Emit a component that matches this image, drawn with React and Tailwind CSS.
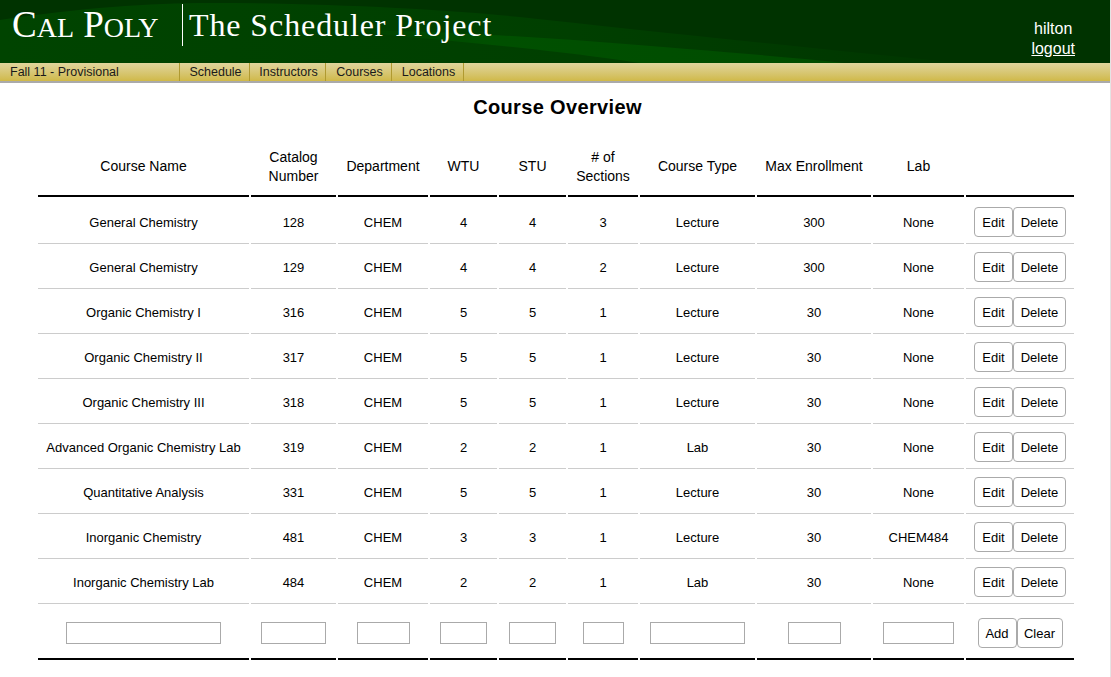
const courses = [
  { name: 'General Chemistry', num: 128, wtu: 4, stu: 4, sec: 3, type: 'Lecture', max: 300, lab: 'None' },
  { name: 'General Chemistry', num: 129, wtu: 4, stu: 4, sec: 2, type: 'Lecture', max: 300, lab: 'None' },
  { name: 'Organic Chemistry I', num: 316, wtu: 5, stu: 5, sec: 1, type: 'Lecture', max: 30, lab: 'None' },
  { name: 'Organic Chemistry II', num: 317, wtu: 5, stu: 5, sec: 1, type: 'Lecture', max: 30, lab: 'None' },
  { name: 'Organic Chemistry III', num: 318, wtu: 5, stu: 5, sec: 1, type: 'Lecture', max: 30, lab: 'None' },
  { name: 'Advanced Organic Chemistry Lab', num: 319, wtu: 2, stu: 2, sec: 1, type: 'Lab', max: 30, lab: 'None' },
  { name: 'Quantitative Analysis', num: 331, wtu: 5, stu: 5, sec: 1, type: 'Lecture', max: 30, lab: 'None' },
  { name: 'Inorganic Chemistry', num: 481, wtu: 3, stu: 3, sec: 1, type: 'Lecture', max: 30, lab: 'CHEM484' },
  { name: 'Inorganic Chemistry Lab', num: 484, wtu: 2, stu: 2, sec: 1, type: 'Lab', max: 30, lab: 'None' },
];

const headers = [
  { label: 'Course Name', w: 'w-[211px]' },
  { label: <>Catalog<br />Number</>, w: 'w-[85px]' },
  { label: 'Department', w: 'w-[90px]' },
  { label: 'WTU', w: 'w-[67px]' },
  { label: 'STU', w: 'w-[67px]' },
  { label: <># of<br />Sections</>, w: 'w-[70px]' },
  { label: 'Course Type', w: 'w-[115px]' },
  { label: 'Max Enrollment', w: 'w-[114px]' },
  { label: 'Lab', w: 'w-[91px]' },
  { label: '', w: 'w-[108px]' },
];

const inputWidths = ['w-[155px]', 'w-[65px]', 'w-[53px]', 'w-[47px]', 'w-[47px]', 'w-[41px]', 'w-[95px]', 'w-[53px]', 'w-[71px]'];

function Btn({ children, className }) {
  return (
    <button className={`h-[30px] rounded-[4px] border border-[#aaaaaa] bg-white pt-[2px] text-[13px] text-black ${className}`}>
      {children}
    </button>
  );
}

function Cell({ children }) {
  return <td className="h-[43px] border-b border-[#cccccc] p-0 pt-[2px] text-center align-middle text-[13px]">{children}</td>;
}

export default function App() {
  return (
    <div className="min-h-[677px] overflow-hidden border-r border-[#e4e4e4] bg-white font-['Liberation_Sans',Arial,sans-serif] text-black">
      <header className="relative flex h-[63px] items-start overflow-hidden bg-[#003300]">
        <svg className="absolute inset-0 h-full w-full" viewBox="0 0 1111 63" preserveAspectRatio="none">
          <defs>
            <linearGradient id="wave" x1="0" y1="0" x2="1" y2="0">
              <stop offset="0" stopColor="#004400" />
              <stop offset="0.6" stopColor="#003f00" />
              <stop offset="1" stopColor="#003600" />
            </linearGradient>
            <linearGradient id="band" x1="0" y1="0" x2="1" y2="0">
              <stop offset="0" stopColor="#005000" stopOpacity="0" />
              <stop offset="0.3" stopColor="#005000" />
              <stop offset="1" stopColor="#004c00" />
            </linearGradient>
          </defs>
          <path d="M0 20 C80 8 150 3 210 3 C330 3 450 10 520 17 C640 30 780 45 960 63 L0 63 Z" fill="url(#wave)" />
          <path d="M340 30 C420 30 520 36 600 42 C700 50 780 56 845 63 L640 63 C590 55 500 45 420 38 C390 35 360 32 340 30 Z" fill="url(#band)" />
        </svg>
        <div className="relative flex w-[182px] shrink-0 items-start">
          <span className="ml-[12px] mt-[5px] whitespace-nowrap font-['Liberation_Serif',serif] text-[37px] leading-[40px] text-white">
            C<span className="text-[28px]">AL</span> P<span className="text-[28px]">OLY</span>
          </span>
        </div>
        <div className="relative mt-[4px] h-[42px] w-px shrink-0 bg-white" />
        <h1 className="relative ml-[6px] mt-[7px] whitespace-nowrap font-['Liberation_Serif',serif] text-[32px] font-normal leading-[36px] tracking-[0.9px] text-white">
          The Scheduler Project
        </h1>
        <div className="relative ml-auto mr-[35px] mt-[19px] flex flex-col items-center text-[16px] leading-[20px] text-white">
          <span>hilton</span>
          <a href="#" className="underline">logout</a>
        </div>
      </header>

      <nav className="flex h-[20px] items-stretch border-b-2 border-[#aaaaaa] bg-gradient-to-b from-[#e0d59c] to-[#d0b947] text-[12.5px] text-[#1a1a1a]">
        <div className="flex w-[180px] items-center border-r border-[#b09a30] pl-[10px]">Fall 11 - Provisional</div>
        {[
          ['Schedule', 'w-[70px]'],
          ['Instructors', 'w-[76px]'],
          ['Courses', 'w-[66px]'],
          ['Locations', 'w-[72px]'],
        ].map(([label, w]) => (
          <div key={label} className={`flex items-center justify-center border-r border-[#b09a30] pl-[2px] ${w}`}>{label}</div>
        ))}
      </nav>

      <h2 className="mt-[12px] pl-[5px] text-center text-[20px] font-bold leading-[24px] tracking-[0.35px]">Course Overview</h2>

      <table className="ml-[36px] mt-[16px] table-fixed border-separate border-spacing-[2px]">
        <thead>
          <tr>
            {headers.map((h, i) => (
              <th key={i} className={`h-[60px] border-b-2 border-black p-0 pt-[1px] text-center align-middle text-[14px] font-normal leading-[19px] ${h.w}`}>
                {h.label}
              </th>
            ))}
          </tr>
        </thead>
        <tbody>
          <tr>
            <td colSpan={10} className="h-0 p-0" />
          </tr>
          {courses.map((c) => (
            <tr key={c.num}>
              <Cell>{c.name}</Cell>
              <Cell>{c.num}</Cell>
              <Cell>CHEM</Cell>
              <Cell>{c.wtu}</Cell>
              <Cell>{c.stu}</Cell>
              <Cell>{c.sec}</Cell>
              <Cell>{c.type}</Cell>
              <Cell>{c.max}</Cell>
              <Cell>{c.lab}</Cell>
              <td className="h-[43px] border-b border-[#cccccc] p-0 align-middle">
                <div className="flex justify-center">
                  <Btn className="w-[39px]">Edit</Btn>
                  <Btn className="w-[53px]">Delete</Btn>
                </div>
              </td>
            </tr>
          ))}
          <tr>
            {inputWidths.map((w, i) => (
              <td key={i} className="h-[54px] border-b-2 border-black p-0 pt-[2px] text-center align-middle">
                <input className={`h-[22px] border border-[#aaaaaa] bg-white ${w}`} />
              </td>
            ))}
            <td className="h-[54px] border-b-2 border-black p-0 pt-[2px] align-middle">
              <div className="flex justify-center">
                <Btn className="w-[39px]">Add</Btn>
                <Btn className="w-[46px]">Clear</Btn>
              </div>
            </td>
          </tr>
        </tbody>
      </table>
    </div>
  );
}
